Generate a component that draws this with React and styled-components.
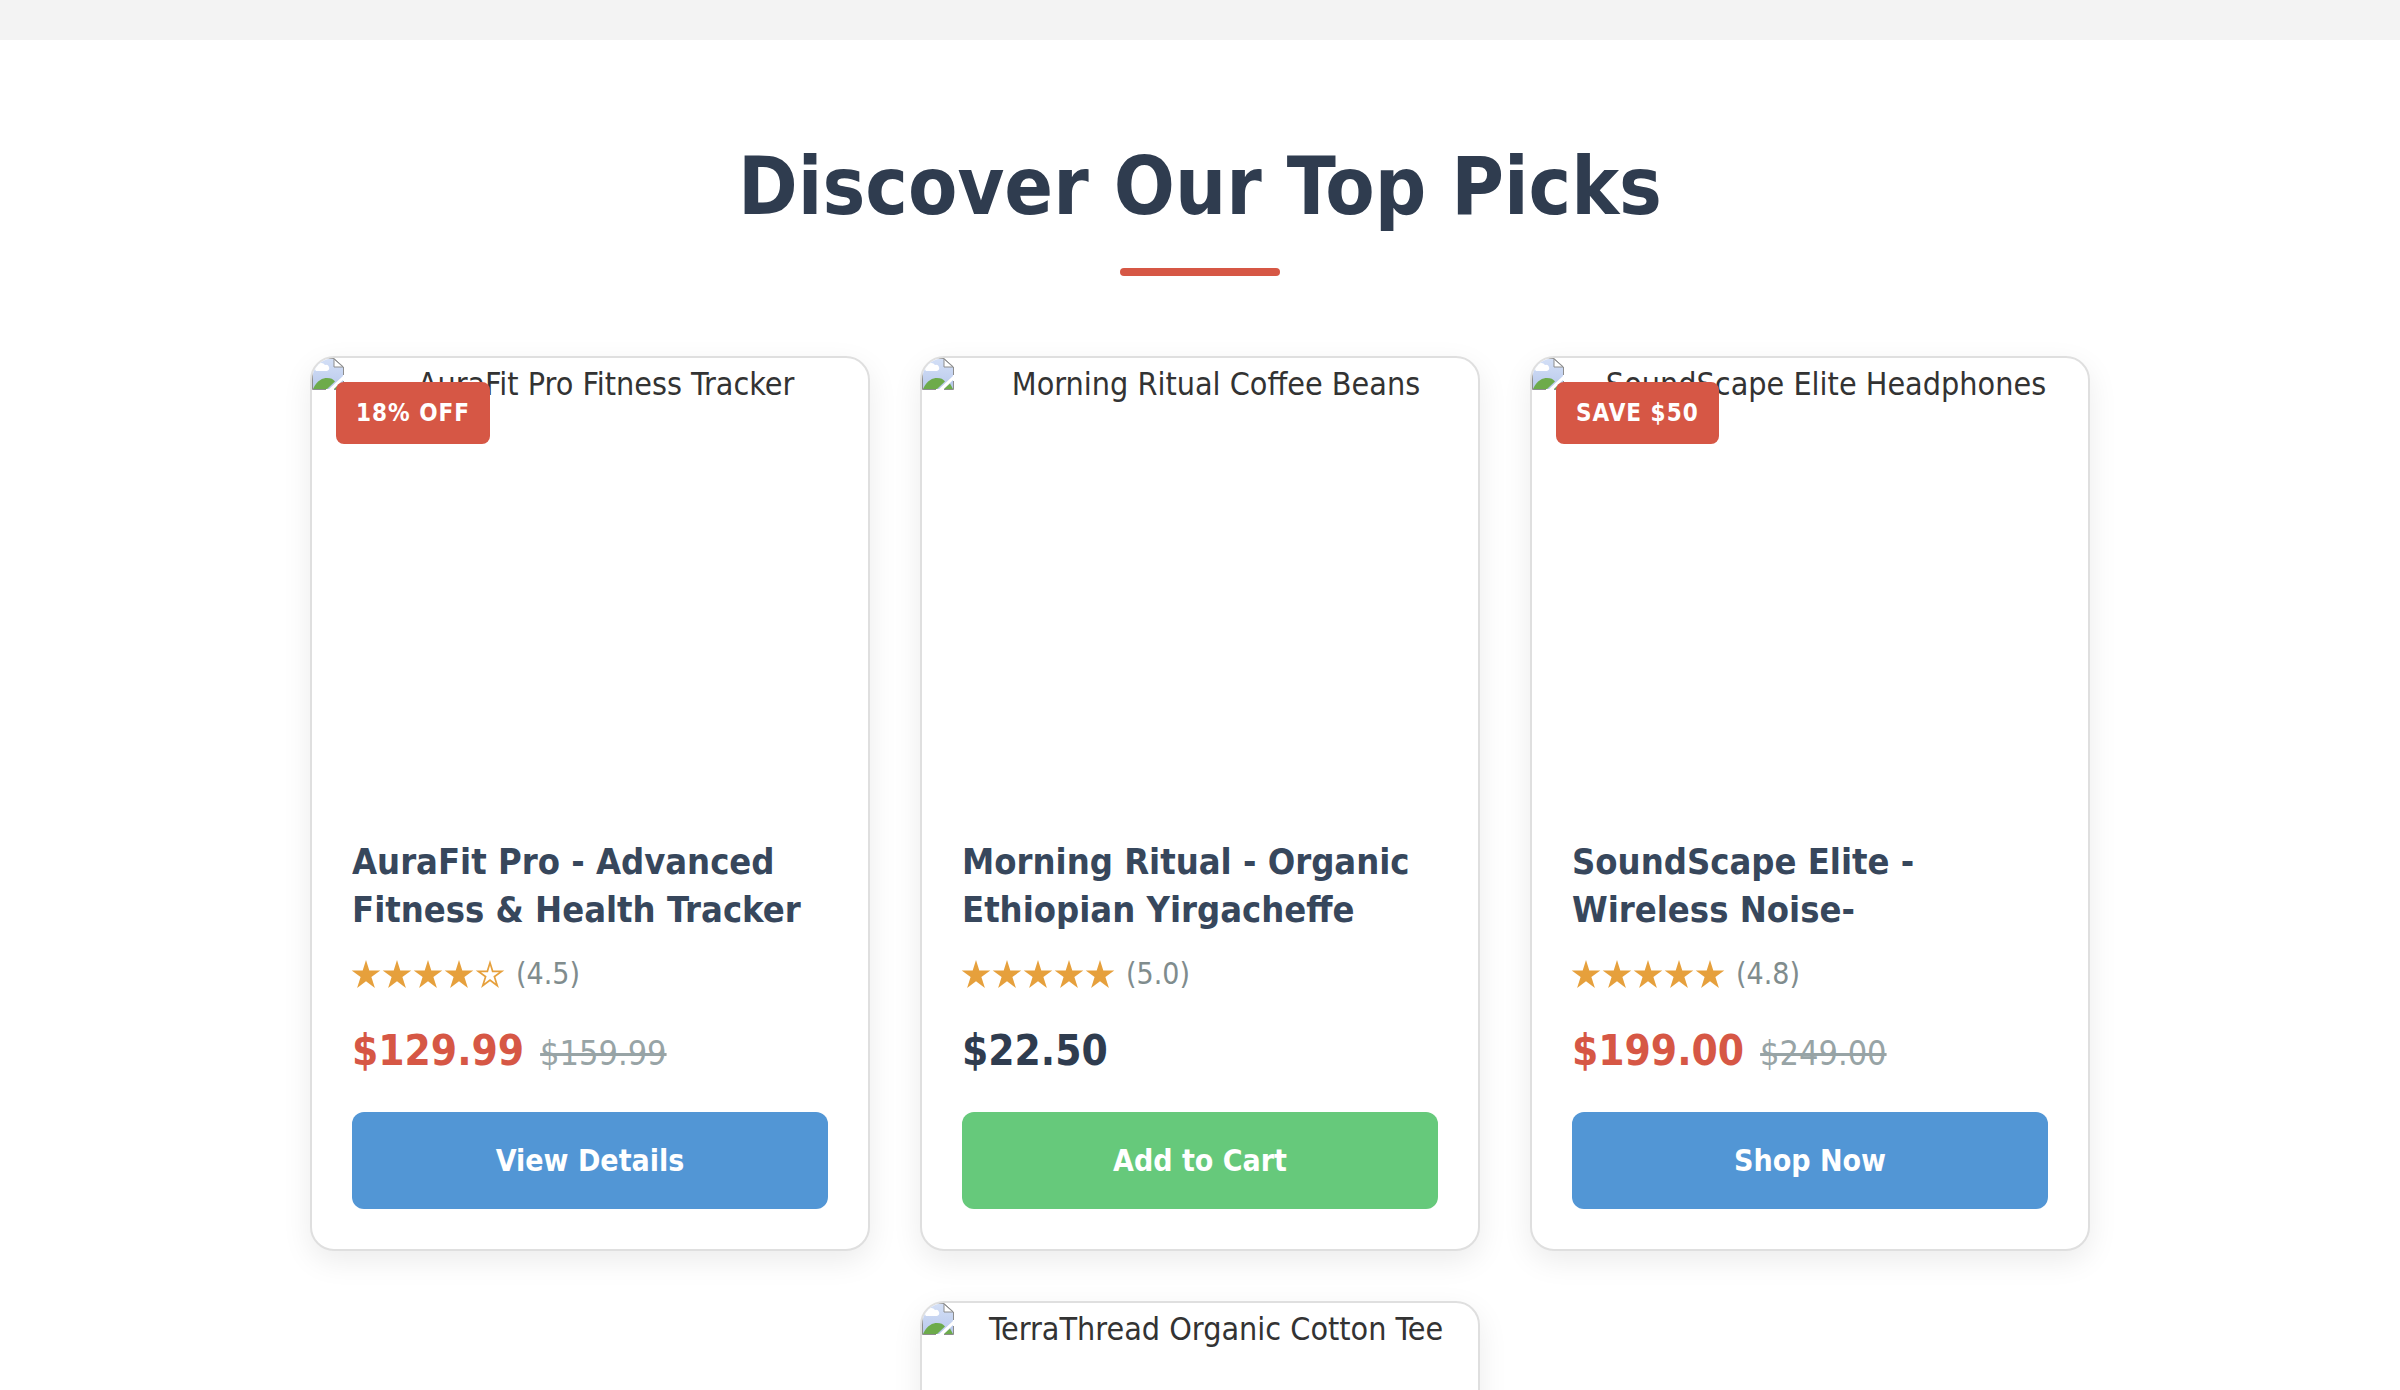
import React from 'react';
import styled, { createGlobalStyle } from 'styled-components';

const GlobalStyle = createGlobalStyle`
  *, *::before, *::after { box-sizing: border-box; }
  body {
    margin: 0;
    background: #f3f3f3;
    color: #333;
    font-family: Tahoma, "DejaVu Sans Condensed", "DejaVu Sans", sans-serif;
    font-size: 32px;
    line-height: 52px;
  }
`;

const Showcase = styled.section`
  margin: 40px 0;
  padding: 80px 40px;
  background: #fff;
`;

const Heading = styled.h2`
  margin: 0 0 80px;
  text-align: center;
  font-size: 80px;
  line-height: 134px;
  font-weight: 700;
  color: #2f3c4f;

  &::after {
    content: "";
    display: block;
    width: 160px;
    height: 8px;
    margin: 14px auto 0;
    border-radius: 4px;
    background: #d65745;
  }
`;

const Grid = styled.ul`
  display: flex;
  flex-wrap: wrap;
  justify-content: center;
  gap: 50px;
  max-width: 2000px;
  margin: 0 auto;
  padding: 0;
  list-style: none;
`;

const Card = styled.li`
  position: relative;
  display: flex;
  flex-direction: column;
  width: 560px;
  border: 2px solid #dfdfdf;
  border-radius: 24px;
  background: #fff;
  overflow: hidden;
  box-shadow: 0 10px 30px rgba(0, 0, 0, 0.08);
`;

const Media = styled.div`
  display: flex;
  height: 440px;
`;

const MissingIcon = styled.svg`
  flex: none;
  width: 32px;
  height: 32px;
`;

const AltText = styled.span`
  flex: 1;
  text-align: center;
`;

const Badge = styled.span`
  position: absolute;
  top: 24px;
  left: 24px;
  padding: 12px 20px;
  border-radius: 8px;
  background: #d65745;
  color: #fff;
  font-size: 24px;
  line-height: 38px;
  font-weight: 700;
  letter-spacing: 1px;
`;

const Details = styled.div`
  display: flex;
  flex-direction: column;
  padding: 40px;
`;

const Name = styled.h3`
  height: 96px;
  margin: 0 0 16px;
  overflow: hidden;
  font-size: 36px;
  line-height: 48px;
  font-weight: 700;
  color: #37475c;
`;

const Rating = styled.div`
  display: flex;
  align-items: center;
  gap: 12px;
  height: 48px;
  margin-bottom: 24px;
  font-size: 30px;
  line-height: 48px;
  color: #808c8d;
`;

const Stars = styled.span`
  display: flex;
  gap: 3px;
`;

const StarIcon = styled.svg`
  width: 28px;
  height: 28px;
  overflow: visible;
  color: #e6a03c;
`;

const Prices = styled.div`
  display: flex;
  align-items: baseline;
  gap: 16px;
  margin-bottom: 32px;
`;

const Price = styled.span`
  font-size: 42px;
  line-height: 58px;
  font-weight: 700;
  color: ${({ $sale }) => ($sale ? '#d65745' : '#2f3c4f')};
`;

const OldPrice = styled.s`
  font-size: 34px;
  line-height: 40px;
  color: #98a4a6;
`;

const Action = styled.button`
  width: 100%;
  padding: 24px;
  border: 0;
  border-radius: 12px;
  background: ${({ $tone }) => ($tone === 'cart' ? '#66c97b' : '#5296d5')};
  color: #fff;
  font-family: inherit;
  font-size: 30px;
  line-height: 49px;
  font-weight: 700;
  cursor: pointer;
`;

const products = [
  {
    alt: 'AuraFit Pro Fitness Tracker',
    badge: '18% OFF',
    name: 'AuraFit Pro - Advanced Fitness & Health Tracker',
    stars: 4,
    score: '(4.5)',
    price: '$129.99',
    oldPrice: '$159.99',
    action: 'View Details',
  },
  {
    alt: 'Morning Ritual Coffee Beans',
    name: 'Morning Ritual - Organic Ethiopian Yirgacheffe',
    stars: 5,
    score: '(5.0)',
    price: '$22.50',
    action: 'Add to Cart',
    tone: 'cart',
  },
  {
    alt: 'SoundScape Elite Headphones',
    badge: 'SAVE $50',
    name: 'SoundScape Elite - Wireless Noise-',
    stars: 5,
    score: '(4.8)',
    price: '$199.00',
    oldPrice: '$249.00',
    action: 'Shop Now',
  },
  { alt: 'TerraThread Organic Cotton Tee' },
];

function BrokenImage() {
  return (
    <MissingIcon viewBox="0 0 32 32" aria-hidden="true">
      <defs>
        <linearGradient id="sky" x1="0" y1="0" x2="0" y2="1">
          <stop offset="0" stopColor="#d3dff6" />
          <stop offset="1" stopColor="#b9c9ec" />
        </linearGradient>
      </defs>
      <path d="M1 1H23L31 9V18L17 31H1Z" fill="url(#sky)" />
      <path d="M4 13a3 3 0 0 1 1-5 4.500 4.500 0 0 1 8-1 3 3 0 0 1 2 6Z" fill="#fff" />
      <path d="M1 31C5 22 11 20 15 20s6 1 8 3.500L15 31Z" fill="#6dab4b" />
      <path d="M22 31L31 22V31Z" fill="#b9c9ec" />
      <path d="M22 31L28 25.500L31 31Z" fill="#6dab4b" />
      <path d="M22 1V9H31Z" fill="#fff" stroke="#8d8d8d" />
      <path d="M0.500 31.500V0.500H22L31.500 9V17M31.500 23V31.500H22M14 31.500H0.500" fill="none" stroke="#8d8d8d" />
    </MissingIcon>
  );
}

const STAR = 'M14 0L17.300 10.500H28.300L19.400 17L22.900 28L14 21.300L5.100 28L8.600 17L-0.300 10.500H10.700Z';
const STAR_HOLE = 'M14 5.500L12 12.200H5L10.600 16.300L8.400 23.200L14 19.100L19.600 23.200L17.400 16.300L23 12.200H16Z';

function Star({ filled }) {
  return (
    <StarIcon viewBox="0 0 28 28" aria-hidden="true">
      <path d={filled ? STAR : STAR + STAR_HOLE} fill="currentColor" fillRule="evenodd" />
    </StarIcon>
  );
}

function ProductCard({ product }) {
  return (
    <Card>
      <Media>
        <BrokenImage />
        <AltText>{product.alt}</AltText>
      </Media>
      {product.badge && <Badge>{product.badge}</Badge>}
      {product.name && (
        <Details>
          <Name>{product.name}</Name>
          <Rating>
            <Stars>
              {[1, 2, 3, 4, 5].map((n) => (
                <Star key={n} filled={n <= product.stars} />
              ))}
            </Stars>
            <span>{product.score}</span>
          </Rating>
          <Prices>
            <Price $sale={Boolean(product.oldPrice)}>{product.price}</Price>
            {product.oldPrice && <OldPrice>{product.oldPrice}</OldPrice>}
          </Prices>
          <Action type="button" $tone={product.tone}>{product.action}</Action>
        </Details>
      )}
    </Card>
  );
}

export default function App() {
  return (
    <>
      <GlobalStyle />
      <Showcase>
        <Heading>Discover Our Top Picks</Heading>
        <Grid>
          {products.map((product) => (
            <ProductCard key={product.alt} product={product} />
          ))}
        </Grid>
      </Showcase>
    </>
  );
}
